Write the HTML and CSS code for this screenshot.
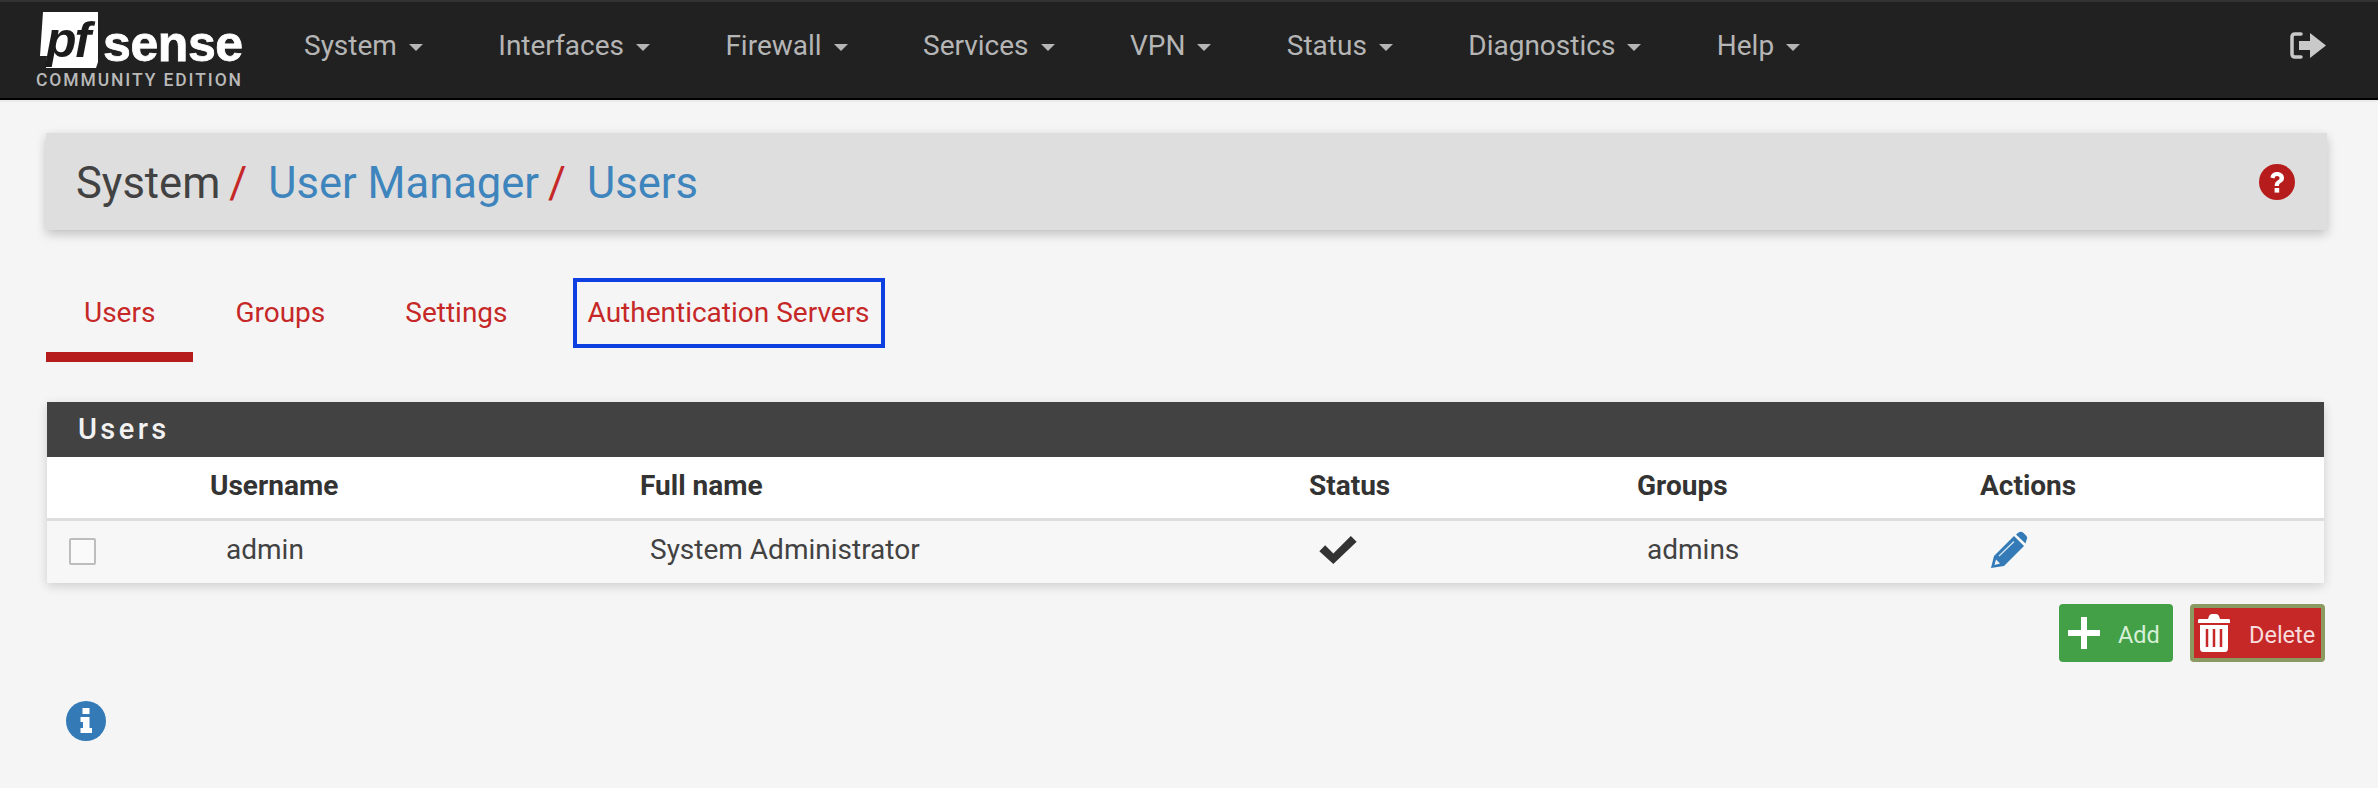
FILE: index.html
```html
<!DOCTYPE html>
<html lang="en">
<head>
<meta charset="utf-8">
<title>pfSense - System / User Manager / Users</title>
<link rel="stylesheet" href="styles.css">
</head>
<body>
<header class="navbar">
  <a class="brand">
    <span class="brand-top">
      <svg class="pf-box" viewBox="0 0 58 56" width="58" height="56"><path d="M3 0H58V50L56 56H6L7 44L0 44L3 0Z" fill="#fff"/><text x="6" y="45" class="pf-text">pf</text></svg>
      <span class="brand-sense">sense</span>
    </span>
    <span class="brand-sub">COMMUNITY EDITION</span>
  </a>
  <nav class="nav-menu">
    <a class="nav-item">System<i class="caret"></i></a>
    <a class="nav-item">Interfaces<i class="caret"></i></a>
    <a class="nav-item">Firewall<i class="caret"></i></a>
    <a class="nav-item">Services<i class="caret"></i></a>
    <a class="nav-item">VPN<i class="caret"></i></a>
    <a class="nav-item">Status<i class="caret"></i></a>
    <a class="nav-item">Diagnostics<i class="caret"></i></a>
    <a class="nav-item">Help<i class="caret"></i></a>
  </nav>
  <svg class="logout" viewBox="0 0 37 27" width="37" height="27"><path d="M11 2H5Q2 2 2 5V22Q2 25 5 25H11" fill="none" stroke="#c9c9c9" stroke-width="3.5" stroke-linecap="round"/><path d="M9 9H20V1L36 13.5L20 26V18H9Z" fill="#c9c9c9"/></svg>
</header>

<main class="page">
  <section class="crumbs">
    <h1 class="crumb-title">
      <span class="crumb-plain">System</span><span class="crumb-sep">/</span><a class="crumb-link">User Manager</a><span class="crumb-sep">/</span><a class="crumb-link">Users</a>
    </h1>
    <svg class="help" viewBox="0 0 36 36" width="36" height="36"><circle cx="18" cy="18" r="18" fill="#b71c1c"/><path d="M11.500 13.500C12 9.500 15 8 18 8C22 8 25 10.500 25 14C25 17 23 18 21.500 19C20 20 20 21 20 22H15.700C15.700 19.500 16.500 18 18.300 16.800C19.800 15.800 20.600 15.200 20.600 14C20.600 12.800 19.500 12 18 12C16.600 12 15.800 12.800 15.500 14.500Z" fill="#fff"/><rect x="15.600" y="24" width="4.600" height="4.600" fill="#fff"/></svg>
  </section>

  <ul class="tabs">
    <li class="tab tab-active">Users</li>
    <li class="tab">Groups</li>
    <li class="tab">Settings</li>
    <li class="tab tab-boxed">Authentication Servers</li>
  </ul>

  <section class="panel">
    <h2 class="panel-head">Users</h2>
    <table class="users">
      <colgroup><col class="c-check"><col class="c-user"><col class="c-name"><col class="c-status"><col class="c-groups"><col class="c-actions"></colgroup>
      <thead>
        <tr><th></th><th>Username</th><th>Full name</th><th>Status</th><th>Groups</th><th>Actions</th></tr>
      </thead>
      <tbody>
        <tr>
          <td class="cell-check"><span class="checkbox"></span></td>
          <td class="cell-user">admin</td>
          <td>System Administrator</td>
          <td><svg class="ico-check" viewBox="2 2 32 24" width="38" height="28"><path d="M2 15L7 10L14 17L29 2L34 7L14 26Z" fill="#333"/></svg></td>
          <td>admins</td>
          <td><svg class="ico-pencil" viewBox="0 0 38 38" width="38" height="38"><path d="M1 37L4 25L24 5L34 15L14 35Z" fill="#337ab7"/><path d="M26 3.500L28.500 1.500Q31 0 33 1.500L36.500 5Q38 7 36.500 9L35.500 12.500Z" fill="#337ab7"/><path d="M9 25L24 10.500" stroke="#dce9f4" stroke-width="1.200"/><path d="M4.500 34L6 28.500L10 32.500Z" fill="#f5f5f5"/></svg></td>
        </tr>
      </tbody>
    </table>
  </section>

  <div class="actions">
    <a class="btn btn-add"><svg class="btn-ico" viewBox="0 0 32 32" width="32" height="32"><path d="M13 0H19V13H32V19H19V32H13V19H0V13H13Z" fill="#fff"/></svg><span class="btn-label">Add</span></a>
    <a class="btn btn-del"><svg class="btn-ico" viewBox="0 0 32 38" width="32" height="38"><path d="M11 2Q12 0 14 0H18Q20 0 21 2L22 5H31Q32 5 32 6.500V9H0V6.500Q0 5 1 5H10Z" fill="#fff"/><path d="M2 11H30V34Q30 38 27 38H5Q2 38 2 34Z" fill="#fff"/><path d="M9 15V33M16 15V33M23 15V33" stroke="#c62828" stroke-width="2.500"/></svg><span class="btn-label">Delete</span></a>
  </div>

  <svg class="info" viewBox="0 0 40 40" width="40" height="40"><circle cx="20" cy="20" r="20" fill="#337ab7"/><rect x="16.500" y="7" width="7" height="6" fill="#fff"/><path d="M14.500 16H23.500V27H26V32H14.500V27H17V21H14.500Z" fill="#fff"/></svg>
</main>
</body>
</html>
```
FILE: styles.css
```css
* { box-sizing: border-box; }
html, body { margin: 0; height: 100%; }
body {
  background: #f5f5f5;
  font-family: Roboto, "Liberation Sans", sans-serif;
  color: #424242;
  overflow: hidden;
}
.navbar {
  height: 100px;
  background: #212121;
  border-top: 2px solid #333;
  border-bottom: 2px solid #000;
  display: flex;
  align-items: flex-start;
  padding: 0 51px 0 36px;
  position: relative;
  margin-bottom: 3px;
}
.navbar::after {
  content: "";
  position: absolute;
  left: 0;
  right: 0;
  bottom: -4px;
  height: 2px;
  background: #eaeaea;
}
.brand { display: flex; flex-direction: column; width: 268px; flex: none; padding-top: 10px; }
.brand-top { display: flex; align-items: flex-start; padding-left: 4px; }
.pf-box { flex: none; }
.pf-text { font: italic bold 50px "Liberation Sans", sans-serif; fill: #1c1c1c; letter-spacing: -2px; }
.brand-sense {
  font: bold 50px/1 "Liberation Sans", sans-serif;
  -webkit-text-stroke: 0.8px #fff;
  letter-spacing: -0.4px;
  color: #fff;
  margin-left: 5px;
  margin-top: 7px;
}
.brand-sub {
  font: 500 17.5px/1 Roboto, sans-serif;
  letter-spacing: 1.9px;
  color: #b9b9b9;
  margin-top: 3px;
  white-space: nowrap;
}
.nav-menu { display: flex; gap: 75.4px; padding-top: 29px; flex: 1; }
.nav-item { font-size: 28px; line-height: 30px; color: #b5b5b5; display: flex; align-items: center; white-space: nowrap; }
.caret {
  width: 0;
  height: 0;
  margin-left: 12px;
  margin-top: 2px;
  border-left: 7px solid transparent;
  border-right: 7px solid transparent;
  border-top: 7px solid #b5b5b5;
}
.logout { margin-top: 30px; flex: none; }

.page { padding: 30px 51px 0 46px; }
.crumbs {
  height: 97px;
  background: #dedede;
  box-shadow: 0 4px 10px rgba(0, 0, 0, .22);
  display: flex;
  align-items: center;
  justify-content: space-between;
  padding: 0 32px 0 30px;
}
.crumb-title { margin: 4px 0 0; font-size: 43.5px; font-weight: 400; line-height: 1; display: flex; }
.crumb-plain { color: #424242; }
.crumb-sep { color: #c62828; margin: 0 21px 0 9px; }
.crumb-link { color: #3f85bd; }
.help { flex: none; }

.tabs {
  list-style: none;
  margin: 48px 0 0;
  padding: 0;
  display: flex;
  height: 84px;
}
.tab {
  font-size: 28px;
  line-height: 28px;
  color: #c62828;
  padding: 21px 38px 0;
  height: 70px;
  margin-right: 4px;
  white-space: nowrap;
}
.tab-active { border-bottom: 10px solid #b71c1c; height: 84px; }
.tab-boxed { border: 4px solid #0e3fe0; padding: 17px 11px 0 11px; margin-left: 23px; }

.panel {
  margin-top: 40px;
  margin-right: 3px;
  margin-left: 1px;
  background: #fff;
  box-shadow: 0 3px 10px rgba(0, 0, 0, .16);
}
.panel-head {
  margin: 0;
  height: 55px;
  background: #424242;
  color: #f2f2f2;
  font-size: 29px;
  font-weight: 500;
  line-height: 55px;
  letter-spacing: 3.4px;
  padding-left: 31px;
}
.users { width: 100%; table-layout: fixed; border-collapse: collapse; }
.c-check { width: 163px; }
.c-user { width: 430px; }
.c-name { width: 669px; }
.c-status { width: 328px; }
.c-groups { width: 343px; }
.users th {
  height: 62px;
  padding: 0 0 3px;
  text-align: left;
  font-size: 28px;
  font-weight: 700;
  color: #333;
  background: #fff;
  border-bottom: 3px solid #ddd;
}
.users td {
  height: 64px;
  padding: 0 0 4px 10px;
  font-size: 28px;
  color: #424242;
  background: #f7f7f7;
  vertical-align: middle;
}
.users td.cell-check { padding: 0 0 0 22px; }
.users td.cell-user { padding-left: 16px; }
.checkbox {
  display: block;
  width: 27px;
  height: 27px;
  border: 2px solid #bdbdbd;
  border-radius: 2px;
  background: #fafafa;
}
.users svg { display: block; }

.actions { display: flex; justify-content: flex-end; gap: 17px; margin: 21px 2px 0 0; }
.btn {
  height: 58px;
  display: flex;
  align-items: center;
  border-radius: 4px;
  color: #fff;
  font-size: 23.5px;
}
.btn-label { padding-top: 3px; }
.btn-add { width: 114px; background: #43a047; padding-left: 9px; color: #d8f0d8; }
.btn-add .btn-ico { margin-right: 18px; }
.btn-del { width: 135px; background: #c62828; border: 4px solid #8a9a60; padding-left: 4px; color: #f8dcdc; }
.btn-del .btn-ico { margin-right: 19px; }
.btn-ico { flex: none; }

.info { display: block; margin: 39px 0 0 20px; }
```
